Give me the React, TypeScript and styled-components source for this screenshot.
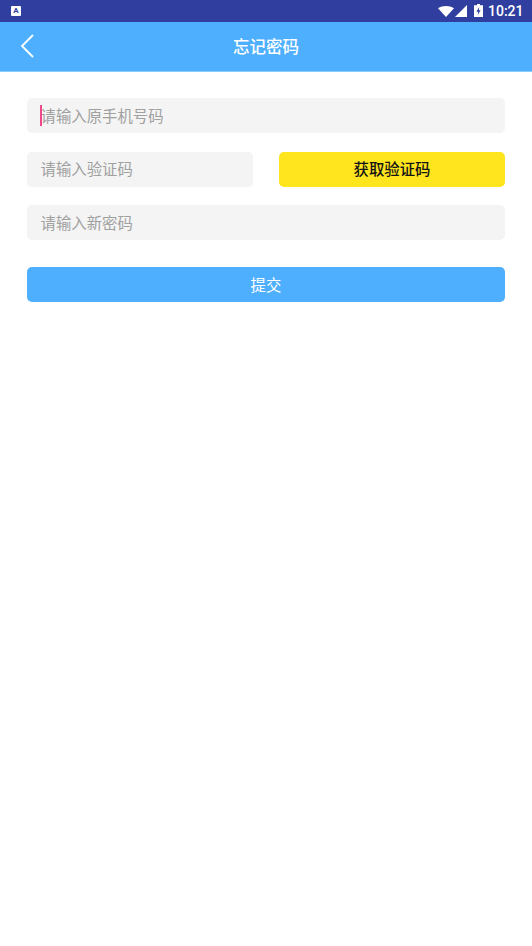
import React from 'react';
import styled, { createGlobalStyle } from 'styled-components';

const GlobalStyle = createGlobalStyle`
  html, body {
    margin: 0;
    padding: 0;
    background: #ffffff;
    font-family: Roboto, "Noto Sans CJK SC", sans-serif;
  }
  * { box-sizing: border-box; }
`;

const Page = styled.div`
  width: 532px;
  height: 946px;
  display: flex;
  flex-direction: column;
  background: #ffffff;
  overflow: hidden;
`;

// --- Status bar ---
const StatusBar = styled.div`
  height: 22px;
  background: #303f9f;
  display: flex;
  align-items: center;
  justify-content: space-between;
  padding: 0 8.5px 0 11px;
`;

const StatusRight = styled.div`
  display: flex;
  align-items: center;
`;

const SignalIcon = styled.svg`
  margin-left: 1px;
`;

const BatteryIcon = styled.svg`
  margin-left: 7px;
  margin-top: -2px;
`;

const Clock = styled.span`
  color: #ffffff;
  font: 500 14px Roboto, sans-serif;
  margin-left: 5px;
`;

const NotifyBadge = styled.div`
  width: 10px;
  height: 10px;
  border-radius: 1px;
  background: #ffffff;
  color: #303f9f;
  font: 700 8px/10px Roboto, sans-serif;
  text-align: center;
`;

// --- Header ---
const Header = styled.div`
  height: 50px;
  background: #4fafff;
  border-bottom: 1px solid #8ccbff;
  display: flex;
  align-items: center;
  justify-content: center;
  position: relative;
`;

const BackIcon = styled.svg`
  position: absolute;
  left: 19px;
  top: 11px;
`;

const Title = styled.h1`
  margin: 0 0 1px;
  color: #ffffff;
  font: 500 16.5px "Noto Sans CJK SC", sans-serif;
`;

// --- Form ---
const Form = styled.div`
  padding: 26px 27px 0;
  display: flex;
  flex-direction: column;
`;

const Row = styled.div<{ $split?: boolean }>`
  display: grid;
  grid-template-columns: ${(p) => (p.$split ? 'minmax(0, 1fr) minmax(0, 1fr)' : 'minmax(0, 1fr)')};
  gap: 26px;
  margin-bottom: 18.5px;
`;

const Field = styled.div`
  height: 35px;
  border-radius: 5px;
  background: #f4f4f4;
  padding: 0 0 2px 13.5px;
  display: flex;
  align-items: center;
  color: #a0a0a0;
  font: 400 15.4px "Noto Sans CJK SC", sans-serif;
  position: relative;
`;

const Caret = styled.span`
  position: absolute;
  left: 13px;
  top: 7px;
  width: 1.5px;
  height: 21px;
  background: #f0468c;
`;

const CodeButton = styled.div`
  height: 35px;
  border-radius: 5px;
  background: #ffe51e;
  color: #151515;
  display: flex;
  align-items: center;
  justify-content: center;
  padding-bottom: 2px;
  font: 500 15.4px "Noto Sans CJK SC", sans-serif;
`;

const SubmitButton = styled.div`
  height: 35px;
  margin-top: 8.5px;
  border-radius: 5px;
  background: #4fafff;
  color: #ffffff;
  display: flex;
  align-items: center;
  justify-content: center;
  padding-bottom: 2px;
  font: 400 15.4px "Noto Sans CJK SC", sans-serif;
`;

export default function App() {
  return (
    <Page>
      <GlobalStyle />
      <StatusBar>
        <NotifyBadge>A</NotifyBadge>
        <StatusRight>
          <svg width="16" height="11" viewBox="0 0 16 11">
            <path d="M0 2.3 C4.7 -0.7 11.3 -0.7 16 2.3 L8 11 Z" fill="#fff" />
          </svg>
          <SignalIcon width="12" height="12" viewBox="0 0 12 12">
            <path d="M0 12 L12 0 V12 Z" fill="#fff" />
          </SignalIcon>
          <BatteryIcon width="9" height="13" viewBox="0 0 9 13">
            <path
              fillRule="evenodd"
              d="M3 0 H6 V1.2 H9 V13 H0 V1.2 H3 Z M5.2 3 L2.4 7.7 H4.2 L3.8 11 L6.6 6.3 H4.8 Z"
              fill="#fff"
            />
          </BatteryIcon>
          <Clock>10:21</Clock>
        </StatusRight>
      </StatusBar>
      <Header>
        <BackIcon width="16" height="26" viewBox="0 0 16 26">
          <path d="M14 2 L3 13 L14 24" fill="none" stroke="#fff" strokeWidth="1.8" />
        </BackIcon>
        <Title>忘记密码</Title>
      </Header>
      <Form>
        <Row>
          <Field>
            <Caret />
            请输入原手机号码
          </Field>
        </Row>
        <Row $split>
          <Field>请输入验证码</Field>
          <CodeButton>获取验证码</CodeButton>
        </Row>
        <Row>
          <Field>请输入新密码</Field>
        </Row>
        <SubmitButton>提交</SubmitButton>
      </Form>
    </Page>
  );
}
